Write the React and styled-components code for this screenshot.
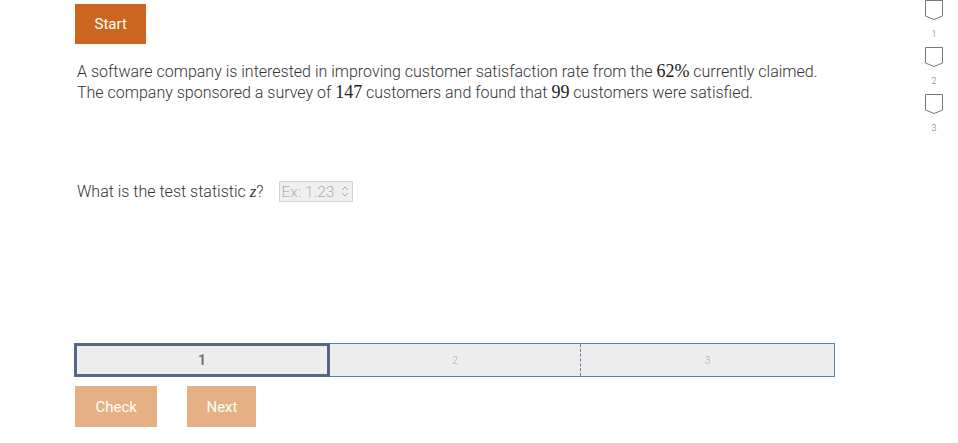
import React from 'react';
import styled, { createGlobalStyle } from 'styled-components';

const GlobalStyle = createGlobalStyle`
  body {
    margin: 0;
    background: #fff;
    font-family: Roboto, "Liberation Sans", sans-serif;
    color: #444;
  }
`;

const Page = styled.div`
  display: flex;
  width: 958px;
  height: 443px;
  overflow: hidden;
`;

const Main = styled.div`
  width: 760px;
  padding: 4px 0 0 75px;
  display: flex;
  flex-direction: column;
`;

const Button = styled.button`
  border: none;
  border-radius: 0;
  background: ${(p) => (p.$faded ? '#e5b083' : '#cc661f')};
  color: #fff;
  font-family: Roboto, "Liberation Sans", sans-serif;
  font-size: 15px;
  height: ${(p) => (p.$faded ? '41px' : '40px')};
  padding: 0 ${(p) => p.$pad}px;
  cursor: pointer;
`;

const Prompt = styled.p`
  margin: 17px 0 0 2px;
  font-size: 16px;
  line-height: 21px;
  font-weight: 300;
  color: #333;
`;

const M = styled.span`
  font-family: "Liberation Serif", "DejaVu Serif", serif;
  font-size: 18px;
  color: #222;
`;

const MathVar = styled.span`
  font-family: "Liberation Serif", serif;
  font-style: italic;
  font-size: 17px;
`;

const QuestionRow = styled.div`
  display: flex;
  align-items: center;
  gap: 15px;
  margin: 78px 0 0 2px;
  font-size: 16px;
  font-weight: 300;
  color: #333;
`;

const InputWrap = styled.div`
  position: relative;
  width: 74px;
  height: 21px;
`;

const NumberInput = styled.input`
  width: 100%;
  height: 100%;
  box-sizing: border-box;
  border: 1px solid #d4d4d4;
  background: #efefef;
  font-family: Roboto, "Liberation Sans", sans-serif;
  font-size: 15.5px;
  font-weight: 300;
  padding: 0 2px;
  &::placeholder { color: #b0b0b0; font-weight: 300; }
  &::-webkit-inner-spin-button,
  &::-webkit-outer-spin-button { -webkit-appearance: none; margin: 0; }
`;

const Spinner = styled.svg`
  position: absolute;
  right: 1px;
  top: 1px;
  background: #efefef;
  pointer-events: none;
`;

const Steps = styled.div`
  display: flex;
  margin: 141px 0 0 -1px;
  width: 761px;
  height: 34px;
  box-sizing: border-box;
  border: 1px solid #5b82ad;
  background: #ededed;
`;

const Step = styled.div`
  flex: ${(p) => (p.$w ? `0 0 ${p.$w}px` : '1')};
  display: flex;
  align-items: center;
  justify-content: center;
  box-sizing: border-box;
  margin: ${(p) => (p.$active ? '-1px 0 -1px -1px' : '0')};
  border: ${(p) => (p.$active ? '3px solid #53688a' : 'none')};
  border-left: ${(p) => (p.$dashed ? '1px dashed #5b82ad' : undefined)};
  color: ${(p) => (p.$active ? '#777' : '#aaa')};
  font-size: ${(p) => (p.$active ? '14px' : '10px')};
  font-weight: ${(p) => (p.$active ? 700 : 300)};
`;

const Actions = styled.div`
  display: flex;
  gap: 30px;
  margin-top: 9px;
`;

const Side = styled.div`
  flex: 1;
  display: flex;
  flex-direction: column;
  align-items: flex-end;
  padding-right: 14px;
`;

const Bookmark = styled.div`
  display: flex;
  flex-direction: column;
  align-items: center;
  width: 20px;
  height: 47px;
  color: #777;
  font-size: 9px;
  font-weight: 300;
  & svg { display: block; }
  & span { margin-top: 7px; }
`;

const Flag = () => (
  <svg width="20" height="22" viewBox="0 0 20 22">
    <path d="M1.5 0.5 H18.5 V16 L10 19.5 L1.5 16 Z" fill="none" stroke="#777" strokeWidth="1" />
  </svg>
);

export default function App() {
  return (
    <Page>
      <GlobalStyle />
      <Main>
        <div>
          <Button $pad={19.5}>Start</Button>
        </div>
        <Prompt>
          A software company is interested in improving customer satisfaction rate from the <M>62%</M> currently claimed.
          <br />
          The company sponsored a survey of <M>147</M> customers and found that <M>99</M> customers were satisfied.
        </Prompt>
        <QuestionRow>
          <span>
            What is the test statistic <MathVar>z</MathVar>?
          </span>
          <InputWrap>
            <NumberInput type="number" placeholder="Ex: 1.23" readOnly />
            <Spinner width="14" height="19" viewBox="0 0 14 19">
              <path d="M4 8 L7 5 L10 8 M4 11 L7 14 L10 11" fill="none" stroke="#aaa" strokeWidth="1" />
            </Spinner>
          </InputWrap>
        </QuestionRow>
        <Steps>
          <Step $w={256} $active>1</Step>
          <Step $w={250}>2</Step>
          <Step $dashed>3</Step>
        </Steps>
        <Actions>
          <Button $faded $pad={20.5}>Check</Button>
          <Button $faded $pad={19}>Next</Button>
        </Actions>
      </Main>
      <Side>
        {[1, 2, 3].map((n) => (
          <Bookmark key={n}>
            <Flag />
            <span>{n}</span>
          </Bookmark>
        ))}
      </Side>
    </Page>
  );
}
